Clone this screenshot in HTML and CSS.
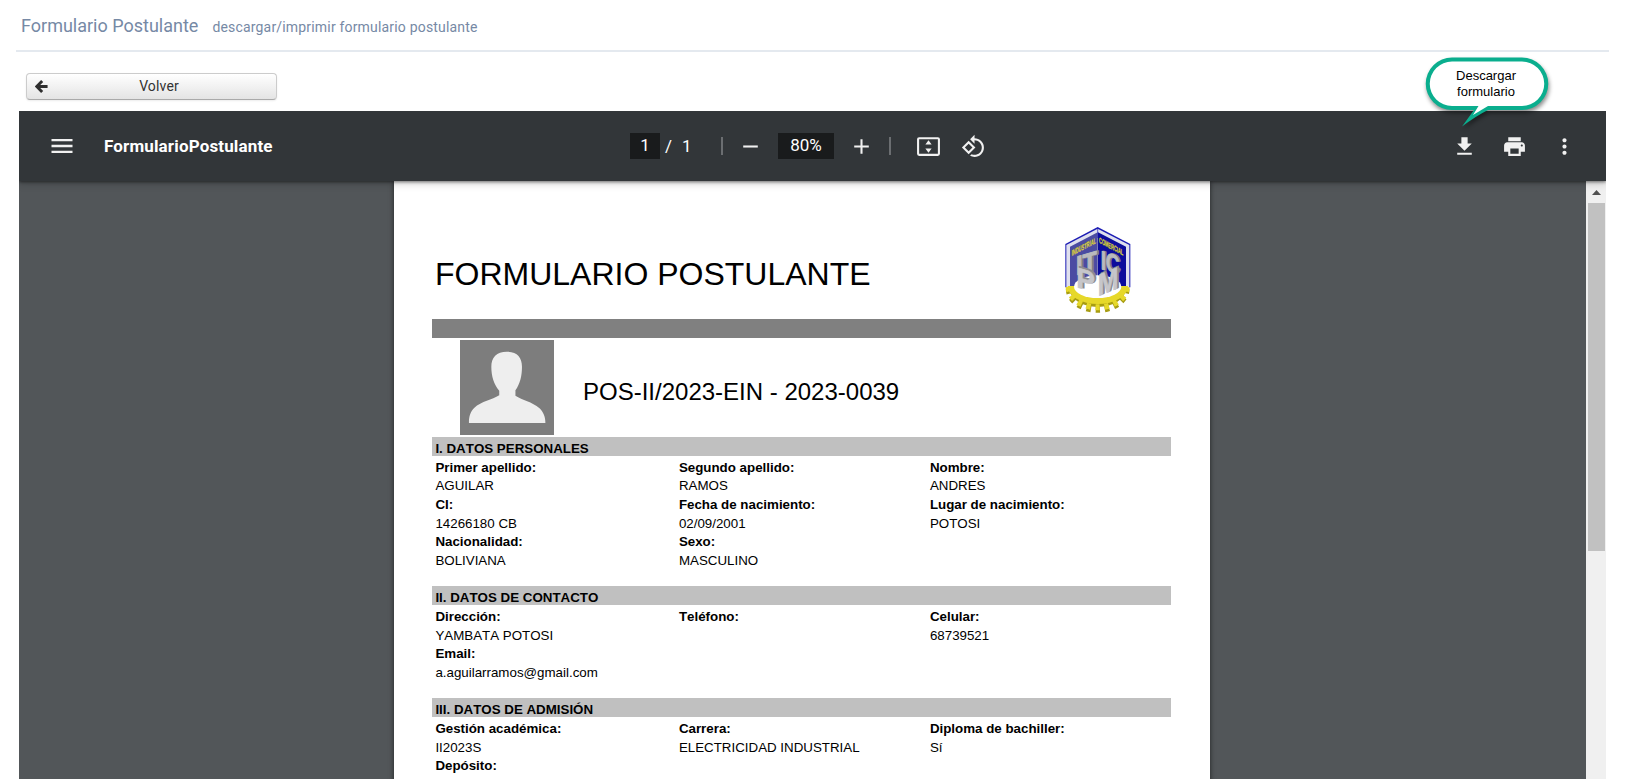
FILE: index.html
```html
<!DOCTYPE html>
<html lang="es">
<head>
<meta charset="utf-8">
<title>Formulario Postulante</title>
<link rel="stylesheet" href="styles.css">
</head>
<body>
<header class="page-header">
  <h1 class="page-title">Formulario Postulante</h1>
  <span class="page-subtitle">descargar/imprimir formulario postulante</span>
</header>

<div class="actions">
  <button class="back-btn" type="button">
    <svg class="back-icon" viewBox="0 0 12 12"><path d="M6.600 1 1.600 6l5 5M2 6h9.600" fill="none" stroke="#2f2f2f" stroke-width="2.700"/></svg>
    <span class="back-label">Volver</span>
  </button>
</div>

<main class="viewer">
  <div class="toolbar">
    <div class="tools-start">
      <svg class="ic ic-menu" viewBox="0 0 24 24"><path d="M3 18h18v-2H3v2zm0-5h18v-2H3v2zm0-7v2h18V6H3z"/></svg>
      <span class="doc-name">FormularioPostulante</span>
    </div>
    <div class="tools-center">
      <span class="field page-no">1</span><span class="slash">/</span><span class="total">1</span>
      <span class="sep"></span>
      <svg class="ic ic-minus" viewBox="0 0 24 24"><path d="M19 13H5v-2h14v2z"/></svg>
      <span class="field zoom-level">80%</span>
      <svg class="ic ic-plus" viewBox="0 0 24 24"><path d="M19 13h-6v6h-2v-6H5v-2h6V5h2v6h6v2z"/></svg>
      <span class="sep sep-2"></span>
      <svg class="ic ic-fit" viewBox="0 0 24 24"><path fill-rule="evenodd" d="M3 3h18a2 2 0 0 1 2 2v14a2 2 0 0 1-2 2H3a2 2 0 0 1-2-2V5a2 2 0 0 1 2-2zm0 2v14h18V5zM12 5.900l3 4.100H9zM12 18.100 9 14h6z"/></svg>
      <svg class="ic ic-rotate" viewBox="0 0 24 24"><path d="M7.340 6.410L.86 12.900l6.490 6.480 6.490-6.480-6.500-6.490zM3.690 12.900l3.660-3.660L11 12.900l-3.660 3.660-3.650-3.660zm15.670-6.260C17.610 4.880 15.300 4 13 4V.76L8.760 5 13 9.240V6c1.790 0 3.580.68 4.950 2.050 2.730 2.730 2.730 7.170 0 9.900C16.580 19.320 14.790 20 13 20c-.97 0-1.940-.21-2.840-.61l-1.490 1.490C10.020 21.620 11.510 22 13 22c2.300 0 4.610-.88 6.360-2.640 3.520-3.510 3.520-9.210 0-12.720z"/></svg>
    </div>
    <div class="tools-end">
      <svg class="ic" viewBox="0 0 24 24"><path d="M19 9h-4V3H9v6H5l7 7 7-7zM5 18v2h14v-2H5z"/></svg>
      <svg class="ic" viewBox="0 0 24 24"><path d="M19 8H5c-1.660 0-3 1.340-3 3v6h4v4h12v-4h4v-6c0-1.660-1.340-3-3-3zm-3 11H8v-5h8v5zm3-7c-.55 0-1-.45-1-1s.45-1 1-1 1 .45 1 1-.45 1-1 1zm-1-9H6v4h12V3z"/></svg>
      <svg class="ic" viewBox="0 0 24 24"><path d="M12 8c1.100 0 2-.9 2-2s-.9-2-2-2-2 .9-2 2 .9 2 2 2zm0 2c-1.100 0-2 .9-2 2s.9 2 2 2 2-.9 2-2-.9-2-2-2zm0 6c-1.100 0-2 .9-2 2s.9 2 2 2 2-.9 2-2-.9-2-2-2z"/></svg>
    </div>
  </div>

  <div class="stage">
    <article class="sheet">
      <div class="sheet-head">
        <h2 class="sheet-title">FORMULARIO POSTULANTE</h2>
        <svg class="crest" viewBox="72 48 204 264">
          <path d="M76 102 173 51l98 51v130H76z" fill="#1b1bb4"/>
          <path d="M79 105 173 56l95 49v127H79z" fill="#dfe0ee"/>
          <path d="M90 110 173 67v170H90z" fill="#4b4ba2"/>
          <path d="M174 67l84 43v122h-84z" fill="#0c0c9c"/>
          <path d="M173 54v30" stroke="#1b1bb4" stroke-width="2"/>
          <g font-family="Liberation Sans, sans-serif" font-weight="700" font-size="24" fill="#e2dc36" stroke="#cfc92f" stroke-width=".8">
            <text transform="matrix(1 -.53 0 1 95 138)" textLength="73" lengthAdjust="spacingAndGlyphs">INDUSTRIAL</text>
            <text transform="matrix(1 .53 0 1 177 98)" textLength="73" lengthAdjust="spacingAndGlyphs">COMERCIAL</text>
          </g>
          <path d="M88 234a85 57 0 0 0 170 0" fill="#a79c12"/>
          <path d="M87 238a86 61 0 0 0 172 0" fill="none" stroke="#a79c12" stroke-width="19" stroke-dasharray="13 14.500"/>
          <path d="M83 228a90 54 0 0 0 181 0" fill="#e6d82a"/>
          <path d="M86 231a87 61 0 0 0 174 0" fill="none" stroke="#e6d82a" stroke-width="18" stroke-dasharray="13 14.500"/>
          <ellipse cx="173" cy="230" rx="71" ry="34" fill="#fff"/>
          <g font-family="Liberation Sans, sans-serif" font-weight="700" stroke-linejoin="round">
            <g fill="#7d7d86" stroke="#7d7d86" stroke-width="5">
              <text transform="matrix(1 -.3 0 1 113 196)" font-size="80" textLength="62" lengthAdjust="spacingAndGlyphs">IT</text>
              <text transform="matrix(1 .3 0 1 186 176)" font-size="78" textLength="56" lengthAdjust="spacingAndGlyphs">IC</text>
            </g>
            <g fill="#b9b9be" stroke="#b9b9be" stroke-width="3">
              <text transform="matrix(1 -.3 0 1 108 196)" font-size="80" textLength="62" lengthAdjust="spacingAndGlyphs">IT</text>
              <text transform="matrix(1 .3 0 1 182 176)" font-size="78" textLength="56" lengthAdjust="spacingAndGlyphs">IC</text>
            </g>
            <g fill="#8a8a90" stroke="#8a8a90" stroke-width="5">
              <text transform="matrix(1 .3 0 1 113 228)" font-size="86" textLength="56" lengthAdjust="spacingAndGlyphs">P</text>
              <text transform="matrix(1 -.4 0 1 178 255)" font-size="92" textLength="62" lengthAdjust="spacingAndGlyphs">M</text>
            </g>
            <g fill="#c6c6ca" stroke="#c6c6ca" stroke-width="2">
              <text transform="matrix(1 .3 0 1 109 231)" font-size="86" textLength="56" lengthAdjust="spacingAndGlyphs">P</text>
              <text transform="matrix(1 -.4 0 1 173 259)" font-size="92" textLength="62" lengthAdjust="spacingAndGlyphs">M</text>
            </g>
          </g>
        </svg>
      </div>
      <div class="band"></div>
      <div class="identity">
        <svg class="avatar" viewBox="0 0 273 285" preserveAspectRatio="none"><path fill="#7d7d7d" d="M0 0h273v285H0z"/><path fill="#eee" d="M136 35c30 0 44 17 44 45 0 29-6 51-19 71v16c20 14 48 17 70 38 12 12 17 27 17 44H26c0-21 4-33 15-45 22-21 52-24 73-38v-14C98 132 91 108 91 80c0-28 15-45 45-45z"/></svg>
        <span class="code">POS-II/2023-EIN - 2023-0039</span>
      </div>

      <section class="block">
        <h3 class="block-title">I. DATOS PERSONALES</h3>
        <dl class="fields">
          <div><dt>Primer apellido:</dt><dd>AGUILAR</dd></div>
          <div><dt>Segundo apellido:</dt><dd>RAMOS</dd></div>
          <div><dt>Nombre:</dt><dd>ANDRES</dd></div>
          <div><dt>CI:</dt><dd>14266180 CB</dd></div>
          <div><dt>Fecha de nacimiento:</dt><dd>02/09/2001</dd></div>
          <div><dt>Lugar de nacimiento:</dt><dd>POTOSI</dd></div>
          <div><dt>Nacionalidad:</dt><dd>BOLIVIANA</dd></div>
          <div><dt>Sexo:</dt><dd>MASCULINO</dd></div>
        </dl>
      </section>
      <section class="block">
        <h3 class="block-title">II. DATOS DE CONTACTO</h3>
        <dl class="fields">
          <div><dt>Dirección:</dt><dd>YAMBATA POTOSI</dd></div>
          <div><dt>Teléfono:</dt></div>
          <div><dt>Celular:</dt><dd>68739521</dd></div>
          <div><dt>Email:</dt><dd>a.aguilarramos@gmail.com</dd></div>
        </dl>
      </section>
      <section class="block">
        <h3 class="block-title">III. DATOS DE ADMISIÓN</h3>
        <dl class="fields">
          <div><dt>Gestión académica:</dt><dd>II2023S</dd></div>
          <div><dt>Carrera:</dt><dd>ELECTRICIDAD INDUSTRIAL</dd></div>
          <div><dt>Diploma de bachiller:</dt><dd>Sí</dd></div>
          <div><dt>Depósito:</dt></div>
        </dl>
      </section>
    </article>
    <div class="scrollbar">
      <svg class="scroll-up" viewBox="0 0 20 22"><path d="M6 14h9l-4.500-5z" fill="#505050"/></svg>
      <div class="thumb"></div>
    </div>
  </div>
</main>

<div class="callout">
  <svg class="callout-shape" viewBox="0 0 130 80"><path fill="#0aae8e" d="M28 2.500H98A26 26 0 0 1 98 55H64Q52 61 38 71.500L50 55H28A26 26 0 0 1 28 2.500Z"/><path d="M28 6.500A22 22 0 0 0 28 51H54.500L49 60 64 51H98A22 22 0 0 0 98 6.500Z" fill="#fff"/></svg>
  <p class="callout-text">Descargar<br>formulario</p>
</div>
</body>
</html>
```

FILE: styles.css
```css
* { box-sizing: border-box; }
body {
  margin: 0;
  height: 779px;
  overflow: hidden;
  background: #fff;
  font-family: Roboto, sans-serif;
  display: flex;
  flex-direction: column;
}
h1, h2, h3, dl, dd, p { margin: 0; font-weight: 400; }

.page-header {
  flex: none;
  height: 52px;
  margin: 0 16px;
  padding: 15px 0 0 5px;
  border-bottom: 2px solid #e4e9ef;
  display: flex;
  align-items: baseline;
  gap: 14px;
  color: #7689a5;
}
.page-title { font-size: 18px; line-height: 22px; }
.page-subtitle { font-size: 14px; letter-spacing: .18px; }

.actions { flex: none; height: 59px; padding: 21px 0 0 26px; }
.back-btn {
  width: 251px;
  height: 27px;
  padding: 0 8px;
  display: flex;
  align-items: center;
  border: 1px solid #ccc;
  border-bottom-color: #aaa;
  border-radius: 4px;
  background: linear-gradient(#fff, #e4e4e4);
  box-shadow: 0 1px 2px rgba(0, 0, 0, .08);
  color: #333;
  font: 14px Roboto, sans-serif;
}
.back-icon { width: 13px; height: 13px; }
.back-label { flex: 1; text-align: center; padding-left: 2px; padding-bottom: 1px; letter-spacing: .15px; }

.viewer { flex: 1; min-height: 0; margin: 0 19px; display: flex; flex-direction: column; background: #525659; }
.toolbar {
  flex: none;
  height: 70px;
  display: grid;
  grid-template-columns: 611px 1fr auto;
  align-items: center;
  background: #323639;
  color: #fff;
  z-index: 1;
  box-shadow: 0 1px 3px rgba(0, 0, 0, .5), 0 3px 8px rgba(0, 0, 0, .16);
  clip-path: inset(0 0 -12px 0);
  font-size: 17px;
}
.ic { width: 25px; height: 25px; fill: #f1f1f1; flex: none; display: block; }
.tools-start, .tools-center, .tools-end { display: flex; align-items: center; }
.tools-start { padding-left: 28.500px; gap: 28.500px; }
.ic-menu { width: 28px; height: 28px; }
.doc-name { font-size: 17px; font-weight: 700; letter-spacing: .15px; }
.field { height: 26px; line-height: 25px; background: #191b1c; text-align: center; }
.page-no { width: 30px; }
.slash { width: 7px; margin-left: 5px; }
.total { margin-left: 10px; width: 10px; }
.sep { width: 2px; height: 18px; margin-left: 29px; background: #6b6e71; }
.ic-minus { margin-left: 15px; }
.zoom-level { width: 56px; margin-left: 15px; }
.ic-plus { margin-left: 15px; }
.sep-2 { margin-left: 15px; }
.ic-fit { margin-left: 25px; }
.ic-rotate { margin-left: 20px; }
.tools-end { gap: 25px; padding-right: 29px; }

.stage { flex: 1; min-height: 0; display: flex; justify-content: space-between; overflow: hidden; }
.sheet {
  width: 816.500px;
  margin-left: 374.500px;
  height: 700px;
  padding: 0 39px 0 38.500px;
  background: #fff;
  color: #000;
  box-shadow: 0 0 5px rgba(0, 0, 0, .6);
  font: 13.330px/18.650px "Liberation Sans", Arial, sans-serif;
  font-kerning: none;
}
.sheet-head { height: 138px; display: flex; justify-content: space-between; padding: 45px 39px 0 3px; }
.sheet-title { font-size: 32px; line-height: 38px; padding-top: 29px; }
.crest { width: 68px; height: 88px; flex: none; overflow: visible; }
.band { height: 19px; background: #808080; }
.identity { height: 99px; display: flex; align-items: center; padding-left: 28px; gap: 29px; }
.avatar { width: 94px; height: 95px; }
.code { font-size: 24px; padding-top: 10px; }
.block-title { height: 19px; padding: 2px 0 0 3.400px; background: #c0c0c0; font-size: 13.330px; line-height: 19px; font-weight: 700; }
.fields {
  display: grid;
  grid-template-columns: 243.500px 251px 1fr;
  padding: 2.600px 0 15.700px 3.400px;
}
.block + .block .fields { padding-top: 2.950px; padding-bottom: 15.350px; }
.fields dt { font-weight: 700; }

.scrollbar { width: 20px; background: #f0f0f0; }
.scroll-up { display: block; width: 20px; height: 22px; }
.thumb { width: 17px; height: 348px; margin-left: 2px; background: #c1c1c1; }

.callout { position: absolute; left: 1424px; top: 55px; width: 130px; height: 80px; z-index: 2; }
.callout-shape { width: 130px; height: 80px; display: block; filter: drop-shadow(1px 3px 2px rgba(0, 0, 0, .45)); }
.callout-text {
  position: absolute;
  left: 2px;
  top: 13px;
  width: 120px;
  text-align: center;
  font: 13px/16px "Liberation Sans", Arial, sans-serif;
  color: #000;
}
```
